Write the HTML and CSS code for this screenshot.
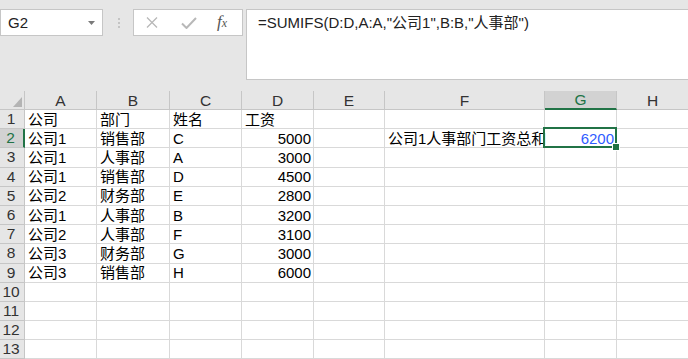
FILE: index.html
```html
<!DOCTYPE html>
<html lang="zh-CN">
<head>
<meta charset="utf-8">
<title>Sheet</title>
<link rel="stylesheet" href="styles.css">
</head>
<body>
<div class="app">
  <div class="toolbar">
    <div class="namebox">
      <span class="name">G2</span>
      <svg class="dd" width="7" height="4" viewBox="0 0 7 4"><path d="M0 0H7L3.5 4Z" fill="#7a7a7a"/></svg>
    </div>
    <div class="sep"><i></i><i></i><i></i></div>
    <div class="fbtns">
      <svg class="ic-x" width="12" height="11" viewBox="0 0 12 11"><path d="M1 0.5L11 10.5M11 0.5L1 10.5" stroke="#b8b8b8" stroke-width="1.3" fill="none"/></svg>
      <svg class="ic-ok" width="16" height="12" viewBox="0 0 16 12"><path d="M1 6.5L5.5 11L15 1" stroke="#b8b8b8" stroke-width="2" fill="none"/></svg>
      <span class="fx">f<sub>x</sub></span>
    </div>
    <div class="fbar">=SUMIFS(D:D,A:A,"公司1",B:B,"人事部")</div>
  </div>

  <div class="grid">
    <div class="corner"><svg width="9" height="10" viewBox="0 0 9 10"><path d="M9 0V10H0Z" fill="#b4b4b4"/></svg></div>
    <div class="ch">A</div><div class="ch">B</div><div class="ch">C</div><div class="ch">D</div><div class="ch">E</div><div class="ch">F</div><div class="ch sel">G</div><div class="ch">H</div>

    <div class="rh">1</div><div class="c">公司</div><div class="c">部门</div><div class="c">姓名</div><div class="c">工资</div><div class="c"></div><div class="c"></div><div class="c"></div><div class="c"></div>
    <div class="rh sel">2</div><div class="c">公司1</div><div class="c">销售部</div><div class="c">C</div><div class="c n">5000</div><div class="c"></div><div class="c">公司1人事部门工资总和</div><div class="c n active">6200</div><div class="c"></div>
    <div class="rh">3</div><div class="c">公司1</div><div class="c">人事部</div><div class="c">A</div><div class="c n">3000</div><div class="c"></div><div class="c"></div><div class="c"></div><div class="c"></div>
    <div class="rh">4</div><div class="c">公司1</div><div class="c">销售部</div><div class="c">D</div><div class="c n">4500</div><div class="c"></div><div class="c"></div><div class="c"></div><div class="c"></div>
    <div class="rh">5</div><div class="c">公司2</div><div class="c">财务部</div><div class="c">E</div><div class="c n">2800</div><div class="c"></div><div class="c"></div><div class="c"></div><div class="c"></div>
    <div class="rh">6</div><div class="c">公司1</div><div class="c">人事部</div><div class="c">B</div><div class="c n">3200</div><div class="c"></div><div class="c"></div><div class="c"></div><div class="c"></div>
    <div class="rh">7</div><div class="c">公司2</div><div class="c">人事部</div><div class="c">F</div><div class="c n">3100</div><div class="c"></div><div class="c"></div><div class="c"></div><div class="c"></div>
    <div class="rh">8</div><div class="c">公司3</div><div class="c">财务部</div><div class="c">G</div><div class="c n">3000</div><div class="c"></div><div class="c"></div><div class="c"></div><div class="c"></div>
    <div class="rh">9</div><div class="c">公司3</div><div class="c">销售部</div><div class="c">H</div><div class="c n">6000</div><div class="c"></div><div class="c"></div><div class="c"></div><div class="c"></div>
    <div class="rh">10</div><div class="c"></div><div class="c"></div><div class="c"></div><div class="c"></div><div class="c"></div><div class="c"></div><div class="c"></div><div class="c"></div>
    <div class="rh">11</div><div class="c"></div><div class="c"></div><div class="c"></div><div class="c"></div><div class="c"></div><div class="c"></div><div class="c"></div><div class="c"></div>
    <div class="rh">12</div><div class="c"></div><div class="c"></div><div class="c"></div><div class="c"></div><div class="c"></div><div class="c"></div><div class="c"></div><div class="c"></div>
    <div class="rh">13</div><div class="c"></div><div class="c"></div><div class="c"></div><div class="c"></div><div class="c"></div><div class="c"></div><div class="c"></div><div class="c"></div>
    <div class="rh"></div><div class="c"></div><div class="c"></div><div class="c"></div><div class="c"></div><div class="c"></div><div class="c"></div><div class="c"></div><div class="c"></div>
  </div>
</div>
</body>
</html>
```

FILE: styles.css
```css
* { box-sizing: border-box; }
html, body {
  margin: 0;
  padding: 0;
  width: 688px;
  height: 359px;
  overflow: hidden;
  background: #e6e6e6;
  font-family: "Liberation Sans", "Noto Sans CJK SC", sans-serif;
  color: #000;
}
.app {
  width: 688px;
  height: 359px;
  overflow: hidden;
}
.toolbar {
  display: flex;
  align-items: flex-start;
  height: 91px;
  padding-top: 9px;
}
.namebox {
  width: 103px;
  height: 27px;
  background: #fff;
  border: 1px solid #c6c6c6;
  display: flex;
  align-items: center;
  justify-content: space-between;
  padding: 0 7px 0 7px;
  font-size: 15px;
  color: #222;
}
.namebox .dd { margin-top: 1px; }
.sep {
  width: 30px;
  height: 27px;
  display: flex;
  flex-direction: column;
  align-items: center;
  justify-content: center;
  gap: 2px;
  padding-left: 2px;
}
.sep i {
  display: block;
  width: 2px;
  height: 2px;
  background: #c4c4c4;
}
.fbtns {
  width: 110px;
  height: 27px;
  background: #fff;
  border: 1px solid #c6c6c6;
  display: flex;
  align-items: center;
  padding-left: 12px;
}
.ic-x { margin-right: 23px; }
.ic-ok { margin-right: 20px; margin-top: 1px; }
.fx {
  font-family: "Liberation Serif", "DejaVu Serif", serif;
  font-style: italic;
  font-size: 17px;
  color: #555;
  line-height: 1;
  margin-top: -2px;
}
.fx sub {
  font-size: 12px;
  vertical-align: baseline;
  position: relative;
  top: 0;
}
.fbar {
  flex: 1;
  height: 71px;
  margin-left: 3px;
  margin-right: -1px;
  background: #fff;
  border: 1px solid #c6c6c6;
  padding: 3px 0 0 11px;
  font-size: 15px;
  line-height: 20px;
  color: #222;
  white-space: nowrap;
}

.grid {
  display: grid;
  grid-template-columns: 25px 72px 73px 72px 72px 71px 160px 72px 72px;
  grid-template-rows: 19px repeat(14, 19.2px);
  background: #fff;
}
.grid > div {
  border-right: 1px solid #d9d9d9;
  border-bottom: 1px solid #d9d9d9;
  font-size: 15px;
  white-space: nowrap;
  overflow: visible;
}
.corner {
  background: #e6e6e6;
  border-color: #c6c6c6 !important;
  display: flex;
  align-items: flex-end;
  justify-content: flex-end;
  padding: 0 2px 2px 0;
}
.corner svg { display: block; }
.ch {
  background: #e6e6e6;
  border-right-color: #c6c6c6 !important;
  border-bottom-color: #c6c6c6 !important;
  text-align: center;
  line-height: 19px;
  font-size: 15.5px !important;
  color: #333;
}
.ch.sel {
  background: #d2d2d2;
  color: #217346;
  border-bottom: 2px solid #217346 !important;
  line-height: 18px;
}
.rh {
  background: #e6e6e6;
  border-right-color: #c6c6c6 !important;
  border-bottom-color: #c6c6c6 !important;
  padding-right: 2px;
  display: flex;
  align-items: center;
  justify-content: center;
  font-size: 15.5px !important;
  color: #333;
}
.rh.sel {
  background: #d2d2d2;
  color: #217346;
  border-right: 2px solid #217346 !important;
}
.c {
  display: flex;
  align-items: center;
  padding: 1px 3px 0 3px;
  line-height: 18px;
}
.c.n { justify-content: flex-end; padding-right: 2px; }
.c.active {
  position: relative;
  color: #2f5cff;
}
.c.active::after {
  content: "";
  position: absolute;
  top: -2px;
  left: -2px;
  right: -1px;
  bottom: -1px;
  border: 2px solid #217346;
  pointer-events: none;
}
.c.active::before {
  content: "";
  position: absolute;
  right: -4px;
  bottom: -4px;
  width: 6px;
  height: 6px;
  background: #217346;
  border: 1px solid #fff;
  z-index: 2;
}
```
